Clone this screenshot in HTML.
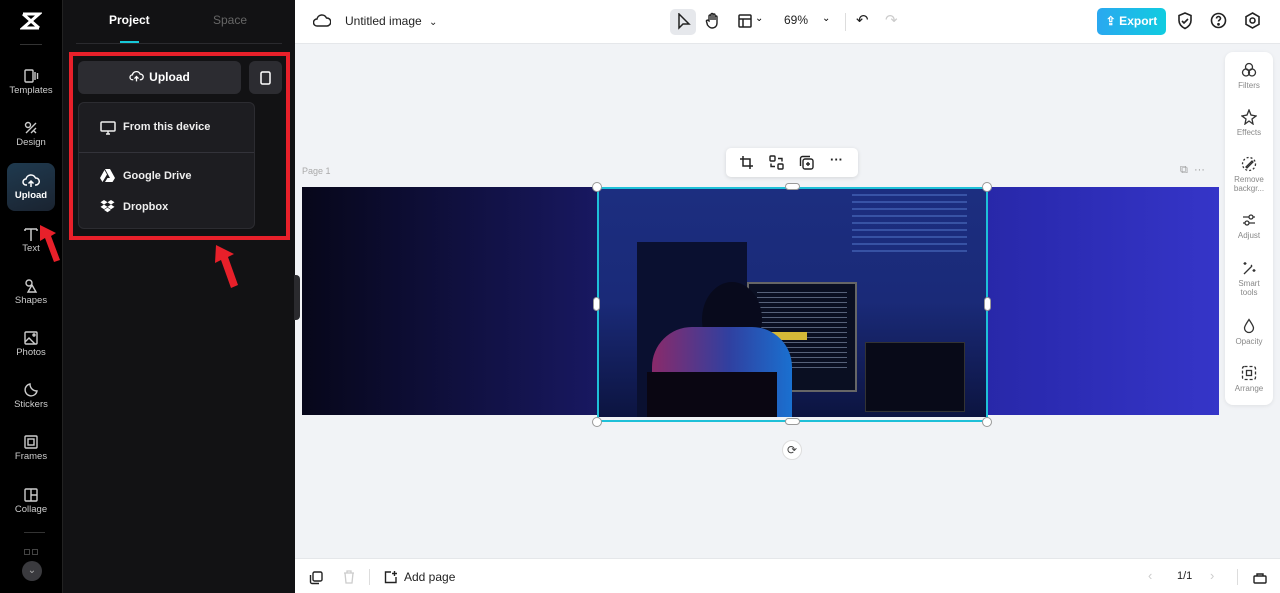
<!DOCTYPE html><html><head><style>
*{margin:0;padding:0;box-sizing:border-box}
body{width:1280px;height:593px;overflow:hidden;font-family:"Liberation Sans",sans-serif;background:#f1f3f6;position:relative}
.a{position:absolute}
.sb{left:0;top:0;width:63px;height:593px;background:#000;border-right:1px solid #222}
.si{position:absolute;left:0;width:62px;text-align:center;color:#ccc;font-size:9.5px}
.si svg{display:block;margin:0 auto 1px}
.pn{left:63px;top:0;width:232px;height:593px;background:#121214}
.top{left:295px;top:0;width:985px;height:44px;background:#fff;border-bottom:1px solid #e5e7ea}
.bot{left:295px;top:558px;width:985px;height:35px;background:#fff;border-top:1px solid #e5e7ea}
.rp{left:1225px;top:52px;width:48px;height:353px;background:#fff;border-radius:8px;box-shadow:0 1px 4px rgba(0,0,0,.08)}
.ri{position:absolute;left:0;width:48px;text-align:center;font-size:8px;color:#888;line-height:9px}
.ri svg{display:block;margin:0 auto 3px}
.h{position:absolute;width:10px;height:10px;border-radius:50%;background:#fff;border:1px solid #999}
</style></head><body>
<div class="a sb">
<svg class="a" style="left:20px;top:10px" width="22" height="22" viewBox="0 0 22 22" fill="none" stroke="#fff" stroke-width="3"><path d="M3 4h16L3 18h16"/><path d="M3 4l16 14"/></svg>
<div class="a" style="left:20px;top:44px;width:22px;height:1px;background:#333"></div>
<div class="si" style="top:68px"><svg width="16" height="16" viewBox="0 0 16 16" fill="none" stroke="#ccc" stroke-width="1.4"><rect x="2" y="2" width="8" height="12" rx="1"/><path d="M12 4v8M14.5 5v6"/></svg>Templates</div>
<div class="si" style="top:120px"><svg width="16" height="16" viewBox="0 0 16 16" fill="none" stroke="#ccc" stroke-width="1.4"><circle cx="5" cy="5" r="2.5"/><path d="M3 13l10-10M8 13l5-5M13 13l-2-2"/></svg>Design</div>
<div class="a" style="left:7px;top:163px;width:48px;height:48px;border-radius:8px;background:linear-gradient(160deg,#1f3a4f,#1a2330)"></div>
<div class="si" style="top:173px;color:#fff;font-weight:bold"><svg width="18" height="16" viewBox="0 0 18 16" fill="none" stroke="#fff" stroke-width="1.5"><path d="M5 12H4a3 3 0 010-6 5 5 0 019.5-1A3.5 3.5 0 0114 12h-1M9 14V8M6.5 10.5L9 8l2.5 2.5"/></svg>Upload</div>
<div class="si" style="top:226px"><svg width="16" height="16" viewBox="0 0 16 16" fill="none" stroke="#ccc" stroke-width="1.5"><path d="M2 3h12M8 3v12M2 3v2M14 3v2"/></svg>Text</div>
<div class="si" style="top:278px"><svg width="16" height="16" viewBox="0 0 16 16" fill="none" stroke="#ccc" stroke-width="1.4"><circle cx="6" cy="5" r="3"/><path d="M9 7l4 7H5z"/></svg>Shapes</div>
<div class="si" style="top:330px"><svg width="16" height="16" viewBox="0 0 16 16" fill="none" stroke="#ccc" stroke-width="1.4"><rect x="2" y="2" width="12" height="12" rx="1"/><path d="M2 12l4-4 6 6"/><circle cx="11" cy="5" r="1"/></svg>Photos</div>
<div class="si" style="top:382px"><svg width="16" height="16" viewBox="0 0 16 16" fill="none" stroke="#ccc" stroke-width="1.4"><path d="M14 9A6 6 0 117 2c0 4 3 7 7 7z"/></svg>Stickers</div>
<div class="si" style="top:434px"><svg width="16" height="16" viewBox="0 0 16 16" fill="none" stroke="#ccc" stroke-width="1.4"><rect x="2" y="2" width="12" height="12" rx="1"/><rect x="5" y="5" width="6" height="6"/></svg>Frames</div>
<div class="si" style="top:487px"><svg width="16" height="16" viewBox="0 0 16 16" fill="none" stroke="#ccc" stroke-width="1.4"><rect x="2" y="2" width="12" height="12" rx="1"/><path d="M8 2v12M8 8h6"/></svg>Collage</div>
<div class="a" style="left:24px;top:532px;width:21px;height:1px;background:#333"></div>
<div class="a" style="left:24px;top:549px;width:6px;height:6px;border:1px solid #444"></div>
<div class="a" style="left:32px;top:549px;width:6px;height:6px;border:1px solid #444"></div>
<div class="a" style="left:22px;top:561px;width:20px;height:20px;border-radius:50%;background:#3a3a3e;color:#aaa;font-size:10px;text-align:center;line-height:20px">⌄</div>
</div>
<div class="a pn">
<div class="a" style="left:46px;top:13px;color:#fff;font-weight:bold;font-size:12px">Project</div>
<div class="a" style="left:150px;top:13px;color:#666;font-size:12px">Space</div>
<div class="a" style="left:13px;top:43px;width:206px;height:1px;background:#2a2a2e"></div>
<div class="a" style="left:57px;top:41px;width:19px;height:2px;background:#16c8d8"></div>
<div class="a" style="left:15px;top:61px;width:163px;height:33px;background:#2c2c31;border-radius:6px;color:#fff;font-weight:bold;font-size:12px;line-height:33px;text-align:center">
<svg width="15" height="13" viewBox="0 0 18 16" fill="none" stroke="#fff" stroke-width="1.6" style="vertical-align:-2px;margin-right:5px"><path d="M5 12H4a3 3 0 010-6 5 5 0 019.5-1A3.5 3.5 0 0114 12h-1M9 14V8M6.5 10.5L9 8l2.5 2.5"/></svg>Upload</div>
<div class="a" style="left:186px;top:61px;width:33px;height:33px;background:#2c2c31;border-radius:6px"><svg style="margin:10px 0 0 11px" width="11" height="14" viewBox="0 0 11 14" fill="none" stroke="#fff" stroke-width="1.5"><rect x="1" y="1" width="9" height="12" rx="1.5"/></svg></div>
<div class="a" style="left:15px;top:102px;width:177px;height:127px;background:#1d1d21;border:1px solid #2c2c31;border-radius:6px;color:#eee;font-weight:bold;font-size:11px">
<svg class="a" style="left:21px;top:18px" width="16" height="14" viewBox="0 0 16 14" fill="none" stroke="#eee" stroke-width="1.5"><rect x="1" y="1" width="14" height="9" rx="1"/><path d="M6 13h4M8 10v3"/></svg>
<div class="a" style="left:44px;top:18px">From this device</div>
<div class="a" style="left:0;top:49px;width:175px;height:1px;background:#33333a"></div>
<svg class="a" style="left:21px;top:66px" width="15" height="13" viewBox="0 0 15 13" fill="#fff"><path d="M5 0h5l5 9h-5z M4.5 1L7 5.5 2.5 13 0 9z M7.5 9H15l-2.5 4H5z"/></svg>
<div class="a" style="left:44px;top:67px">Google Drive</div>
<svg class="a" style="left:21px;top:97px" width="15" height="14" viewBox="0 0 15 14" fill="#fff"><path d="M4 0l3.5 2.3L4 4.6 0.5 2.3z M11 0l3.5 2.3L11 4.6 7.5 2.3z M4 4.6l3.5 2.3L4 9.2 0.5 6.9z M11 4.6l3.5 2.3L11 9.2 7.5 6.9z M7.5 7.6l3.5 2.3-3.5 2.3L4 9.9z"/></svg>
<div class="a" style="left:44px;top:98px">Dropbox</div>
</div>
<div class="a" style="left:6px;top:52px;width:221px;height:188px;border:4px solid #e8202a"></div>
<div class="a" style="left:231px;top:275px;width:6px;height:45px;background:#2a2a2e;border-radius:0 4px 4px 0"></div>
</div>
<svg class="a" style="left:36px;top:222px" width="30" height="42" viewBox="0 0 30 42"><path d="M4 3l16 8-5 3 9 24-6 2-9-24-5 3z" fill="#e8202a"/></svg>
<svg class="a" style="left:210px;top:243px" width="36" height="48" viewBox="0 0 36 48"><path d="M6 2l18 9-6 3 10 28-7 3-10-28-6 3z" fill="#e8202a"/></svg>
<div class="a top">
<svg class="a" style="left:18px;top:13px" width="18" height="16" viewBox="0 0 18 16" fill="none" stroke="#222" stroke-width="1.5"><path d="M5 13H4a3.5 3.5 0 010-7 5 5 0 019.5-1A4 4 0 0114 13z"/></svg>
<div class="a" style="left:50px;top:14px;font-size:12px;color:#222">Untitled image <span style="font-size:10px;margin-left:4px">⌄</span></div>
<div class="a" style="left:375px;top:9px;width:26px;height:26px;border-radius:5px;background:#e6e8ec"></div>
<svg class="a" style="left:382px;top:13px" width="14" height="17" viewBox="0 0 14 17" fill="none" stroke="#222" stroke-width="1.5"><path d="M2 1v14l4-4h6z"/></svg>
<svg class="a" style="left:410px;top:12px" width="16" height="18" viewBox="0 0 16 18" fill="none" stroke="#222" stroke-width="1.4"><path d="M4 9V4a1 1 0 012 0v4V2.5a1 1 0 012 0V8V3a1 1 0 012 0v5-3a1 1 0 012 0v6c0 3-2 5-5 5-2 0-3-1-4.5-3L1.5 9.5a1 1 0 011.7-1z"/></svg>
<svg class="a" style="left:443px;top:14px" width="14" height="14" viewBox="0 0 14 14" fill="none" stroke="#222" stroke-width="1.5"><rect x="1" y="1" width="12" height="12" rx="1"/><path d="M1 5h12M5 5v8"/></svg>
<div class="a" style="left:460px;top:13px;font-size:10px">⌄</div>
<div class="a" style="left:489px;top:13px;font-size:12px;color:#222">69%</div>
<div class="a" style="left:527px;top:13px;font-size:10px">⌄</div>
<div class="a" style="left:550px;top:13px;width:1px;height:18px;background:#ddd"></div>
<div class="a" style="left:561px;top:11px;font-size:15px;color:#222">↶</div>
<div class="a" style="left:590px;top:11px;font-size:15px;color:#ccc">↷</div>
<div class="a" style="left:802px;top:8px;width:69px;height:27px;border-radius:5px;background:linear-gradient(90deg,#2aa8f0,#10cce0);color:#fff;font-weight:bold;font-size:12px;line-height:27px;text-align:center">⇪ Export</div>
<svg class="a" style="left:882px;top:12px" width="16" height="18" viewBox="0 0 16 18" fill="none" stroke="#222" stroke-width="1.6"><path d="M8 1l6 2.5v5c0 4-3 6.5-6 8-3-1.5-6-4-6-8v-5z"/><path d="M5 9l2 2 4-4"/></svg>
<svg class="a" style="left:915px;top:12px" width="17" height="17" viewBox="0 0 17 17" fill="none" stroke="#222" stroke-width="1.6"><circle cx="8.5" cy="8.5" r="7"/><path d="M6.5 6.5a2 2 0 114 0c0 1.5-2 1.5-2 3"/><circle cx="8.5" cy="12.3" r=".6" fill="#222"/></svg>
<svg class="a" style="left:949px;top:12px" width="17" height="17" viewBox="0 0 17 17" fill="none" stroke="#222" stroke-width="1.6"><path d="M8.5 1l6.5 3.7v7.6L8.5 16 2 12.3V4.7z"/><circle cx="8.5" cy="8.5" r="2.5"/></svg>
</div>
<div class="a" style="left:302px;top:166px;font-size:9px;color:#aaa">Page 1</div>
<div class="a" style="left:1180px;top:164px;font-size:11px;color:#999">⧉ &nbsp;···</div>
<div class="a" style="left:302px;top:187px;width:917px;height:228px;background:linear-gradient(90deg,#07071a 0%,#141450 25%,#1f1f80 45%,#2a2ab0 80%,#3535c8 100%)"></div>
<div class="a" style="left:597px;top:187px;width:390px;height:230px;overflow:hidden;background:linear-gradient(180deg,#1c2e80,#1a2a78 50%,#0c1440)">
<div class="a" style="left:255px;top:0;width:115px;height:70px;background:repeating-linear-gradient(180deg,rgba(120,170,255,.3) 0 2px,transparent 2px 7px)"></div>
<div class="a" style="left:40px;top:55px;width:110px;height:180px;background:#0a1030"></div>
<div class="a" style="left:150px;top:95px;width:110px;height:110px;background:#0a0f22;border:2px solid #666"></div>
<div class="a" style="left:160px;top:105px;width:90px;height:80px;background:repeating-linear-gradient(180deg,rgba(200,220,255,.4) 0 1px,transparent 1px 5px)"></div>
<div class="a" style="left:160px;top:145px;width:50px;height:8px;background:#d4b838"></div>
<div class="a" style="left:268px;top:155px;width:100px;height:70px;background:#080a18;border:1px solid #333"></div>
<div class="a" style="left:105px;top:95px;width:60px;height:75px;border-radius:50%;background:#080a1c"></div>
<div class="a" style="left:55px;top:140px;width:140px;height:100px;border-radius:40px 40px 0 0;background:linear-gradient(90deg,#8a2a6a,#3040a0 55%,#1a70d0)"></div>
<div class="a" style="left:50px;top:185px;width:130px;height:45px;background:#0a0612"></div>
</div>
<div class="a" style="left:597px;top:187px;width:391px;height:235px;border:2px solid #1ec0d8"></div>
<div class="h" style="left:592px;top:182px"></div><div class="h" style="left:982px;top:182px"></div>
<div class="h" style="left:592px;top:417px"></div><div class="h" style="left:982px;top:417px"></div>
<div class="a" style="left:785px;top:183px;width:15px;height:7px;border-radius:4px;background:#fff;border:1px solid #999"></div>
<div class="a" style="left:785px;top:418px;width:15px;height:7px;border-radius:4px;background:#fff;border:1px solid #999"></div>
<div class="a" style="left:593px;top:297px;width:7px;height:14px;border-radius:4px;background:#fff;border:1px solid #999"></div>
<div class="a" style="left:984px;top:297px;width:7px;height:14px;border-radius:4px;background:#fff;border:1px solid #999"></div>
<div class="a" style="left:782px;top:440px;width:20px;height:20px;border-radius:50%;background:#fff;border:1px solid #ddd;font-size:12px;text-align:center;line-height:18px;color:#444">⟳</div>
<div class="a" style="left:726px;top:148px;width:132px;height:29px;background:#fff;border-radius:5px;box-shadow:0 1px 4px rgba(0,0,0,.12)">
<svg class="a" style="left:13px;top:7px" width="15" height="15" viewBox="0 0 15 15" fill="none" stroke="#222" stroke-width="1.5"><path d="M4 1v10h10M1 4h10v10"/></svg>
<svg class="a" style="left:43px;top:7px" width="15" height="15" viewBox="0 0 15 15" fill="none" stroke="#222" stroke-width="1.4"><rect x="1" y="1" width="5" height="5" rx="1"/><rect x="9" y="9" width="5" height="5" rx="1"/><path d="M9 3.5h4v3M6 11.5H2v-3"/></svg>
<svg class="a" style="left:73px;top:7px" width="15" height="15" viewBox="0 0 15 15" fill="none" stroke="#222" stroke-width="1.4"><rect x="4" y="4" width="10" height="10" rx="2"/><path d="M11 1.5H3.5a2 2 0 00-2 2V11M9 7v4M7 9h4"/></svg>
<div class="a" style="left:104px;top:4px;font-weight:bold;font-size:13px;color:#222">···</div></div>
<div class="a rp">
<div class="ri" style="top:10px"><svg width="16" height="16" viewBox="0 0 16 16" fill="none" stroke="#333" stroke-width="1.3"><circle cx="8" cy="5" r="3.5"/><circle cx="5" cy="10.5" r="3.5"/><circle cx="11" cy="10.5" r="3.5"/></svg>Filters</div>
<div class="ri" style="top:57px"><svg width="16" height="16" viewBox="0 0 16 16" fill="none" stroke="#333" stroke-width="1.3"><path d="M8 1l2 5 5 1-4 3 1 5-4-3-4 3 1-5-4-3 5-1z"/></svg>Effects</div>
<div class="ri" style="top:104px"><svg width="16" height="16" viewBox="0 0 16 16" fill="none" stroke="#333" stroke-width="1.3"><circle cx="8" cy="8" r="6.5" stroke-dasharray="2 2"/><path d="M5 11l6-6 1 1-6 6z"/></svg>Remove<br>backgr...</div>
<div class="ri" style="top:160px"><svg width="16" height="16" viewBox="0 0 16 16" fill="none" stroke="#333" stroke-width="1.3"><path d="M2 5h12M2 11h12"/><circle cx="10" cy="5" r="2" fill="#fff"/><circle cx="6" cy="11" r="2" fill="#fff"/></svg>Adjust</div>
<div class="ri" style="top:208px"><svg width="16" height="16" viewBox="0 0 16 16" fill="none" stroke="#333" stroke-width="1.3"><path d="M3 14l8-8M10 5l1 1M4 2v3M2.5 3.5h3M13 9v3M11.5 10.5h3"/></svg>Smart<br>tools</div>
<div class="ri" style="top:266px"><svg width="16" height="16" viewBox="0 0 16 16" fill="none" stroke="#333" stroke-width="1.3"><path d="M8 1.5C5 6 3.5 8 3.5 10a4.5 4.5 0 009 0c0-2-1.5-4-4.5-8.5z"/></svg>Opacity</div>
<div class="ri" style="top:313px"><svg width="16" height="16" viewBox="0 0 16 16" fill="none" stroke="#333" stroke-width="1.3"><rect x="1.5" y="1.5" width="13" height="13" rx="2" stroke-dasharray="3 2"/><rect x="5.5" y="5.5" width="5" height="5"/></svg>Arrange</div>
</div>
<div class="a bot">
<svg class="a" style="left:14px;top:12px" width="14" height="14" viewBox="0 0 14 14" fill="none" stroke="#222" stroke-width="1.4"><rect x="4" y="1" width="9" height="9" rx="1.5"/><path d="M10 12.5H3a1.5 1.5 0 01-1.5-1.5V4"/></svg>
<svg class="a" style="left:48px;top:11px" width="12" height="14" viewBox="0 0 12 14" fill="none" stroke="#ccc" stroke-width="1.3"><path d="M1 3h10M4 3V1h4v2M2 3l1 10h6l1-10"/></svg>
<div class="a" style="left:74px;top:10px;width:1px;height:16px;background:#ddd"></div>
<svg class="a" style="left:89px;top:11px" width="14" height="14" viewBox="0 0 14 14" fill="none" stroke="#222" stroke-width="1.4"><path d="M12 7v5.5H1.5V2H7M10.5 1v5M8 3.5h5"/></svg>
<div class="a" style="left:109px;top:11px;font-size:12px;color:#222">Add page</div>
<div class="a" style="left:853px;top:9px;font-size:13px;color:#ccc">‹</div>
<div class="a" style="left:882px;top:11px;font-size:11px;color:#222">1/1</div>
<div class="a" style="left:915px;top:9px;font-size:13px;color:#ccc">›</div>
<div class="a" style="left:942px;top:10px;width:1px;height:16px;background:#ddd"></div>
<svg class="a" style="left:958px;top:12px" width="14" height="13" viewBox="0 0 14 13" fill="none" stroke="#222" stroke-width="1.4"><rect x="1" y="5" width="12" height="7" rx="1"/><path d="M4 5V3h6v2"/></svg>
</div>
</body></html>
